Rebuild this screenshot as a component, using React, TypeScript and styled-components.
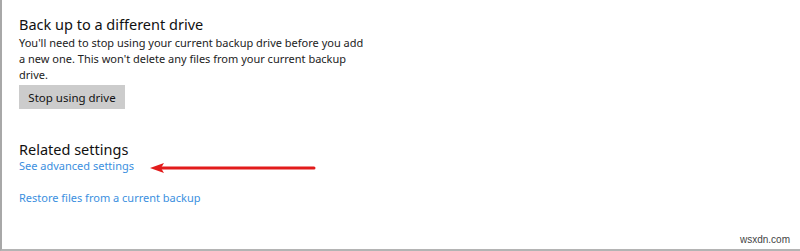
import React from 'react';
import styled, { createGlobalStyle } from 'styled-components';

const GlobalStyle = createGlobalStyle`
  html, body {
    margin: 0;
    padding: 0;
    background: #ffffff;
  }
  body {
    font-family: 'Noto Sans', 'Open Sans', Arial, sans-serif;
  }
`;

const Frame = styled.div`
  position: relative;
  box-sizing: border-box;
  width: 800px;
  height: 251px;
  background: #fff;
  border-left: 2px solid #a8a8a8;
  border-bottom: 2px solid #b4b4b4;
  padding: 13px 0 0 17px;
  overflow: hidden;
`;

const Section = styled.section<{ gap?: number }>`
  display: flex;
  flex-direction: column;
  align-items: flex-start;
  margin-bottom: ${props => `${props.gap ?? 0}px`};
`;

const Heading = styled.h2<{ tight?: boolean }>`
  margin: 0 0 ${props => (props.tight ? '-2px' : '0')};
  font-size: 14.5px;
  font-weight: 400;
  line-height: 22px;
  color: #111;
`;

const Body = styled.p`
  margin: 0;
  width: 350px;
  font-size: 11px;
  line-height: 16px;
  color: #222;
`;

const GrayButton = styled.button`
  margin-top: 2px;
  width: 106px;
  height: 24px;
  border: none;
  background: #cccccc;
  color: #111;
  font-family: inherit;
  font-size: 11.5px;
  padding: 0;
`;

const Link = styled.a<{ spaced?: boolean }>`
  margin-top: ${props => (props.spaced ? '16px' : '0')};
  font-size: 11px;
  line-height: 16px;
  color: #3b8fe0;
  text-decoration: none;
`;

const Arrow = styled.svg`
  position: absolute;
  left: 146px;
  top: 160px;
`;

const Watermark = styled.span`
  position: absolute;
  right: 10px;
  bottom: 4px;
  font-family: 'Liberation Sans', Arial, sans-serif;
  font-size: 10px;
  color: #444;
`;

export default function App() {
  return (
    <>
      <GlobalStyle />
      <Frame>
        <Section gap={29}>
          <Heading>Back up to a different drive</Heading>
          <Body>
            You'll need to stop using your current backup drive before you add a new one. This
            won't delete any files from your current backup drive.
          </Body>
          <GrayButton>Stop using drive</GrayButton>
        </Section>
        <Section>
          <Heading tight>Related settings</Heading>
          <Link href="#">See advanced settings</Link>
          <Link href="#" spaced>
            Restore files from a current backup
          </Link>
        </Section>
        <Arrow width="172" height="16" viewBox="0 0 172 16">
          <line x1="14" y1="8" x2="166" y2="8" stroke="#e21b1b" strokeWidth="3" strokeLinecap="round" />
          <polygon points="2,8 16,3 13,8 16,13" fill="#e21b1b" />
        </Arrow>
        <Watermark>wsxdn.com</Watermark>
      </Frame>
    </>
  );
}
